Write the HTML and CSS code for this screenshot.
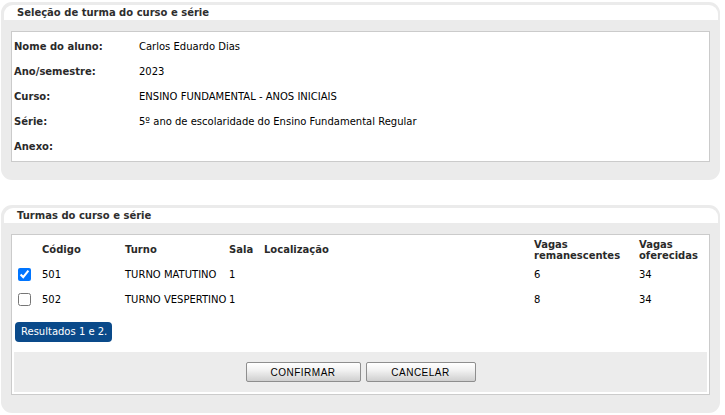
FILE: index.html
```html
<!DOCTYPE html>
<html lang="pt-BR">
<head>
<meta charset="utf-8">
<title>Seleção de turma</title>
<link rel="stylesheet" href="styles.css">
</head>
<body>
<section class="panel panel-first">
  <h2 class="panel-title">Seleção de turma do curso e série</h2>
  <div class="panel-body">
    <div class="box">
      <dl class="info">
        <dt>Nome do aluno:</dt><dd>Carlos Eduardo Dias</dd>
        <dt>Ano/semestre:</dt><dd>2023</dd>
        <dt>Curso:</dt><dd>ENSINO FUNDAMENTAL - ANOS INICIAIS</dd>
        <dt>Série:</dt><dd>5º ano de escolaridade do Ensino Fundamental Regular</dd>
        <dt>Anexo:</dt><dd></dd>
      </dl>
    </div>
  </div>
</section>

<section class="panel panel-second">
  <h2 class="panel-title">Turmas do curso e série</h2>
  <div class="panel-body">
    <div class="box">
      <table class="turmas">
        <colgroup>
          <col class="c-check"><col class="c-cod"><col class="c-turno"><col class="c-sala"><col class="c-loc"><col class="c-rem"><col class="c-ofe">
        </colgroup>
        <thead>
          <tr>
            <th></th><th>Código</th><th>Turno</th><th>Sala</th><th>Localização</th><th>Vagas<br>remanescentes</th><th>Vagas<br>oferecidas</th>
          </tr>
        </thead>
        <tbody>
          <tr>
            <td><input type="checkbox" checked></td><td>501</td><td>TURNO MATUTINO</td><td>1</td><td></td><td>6</td><td>34</td>
          </tr>
          <tr>
            <td><input type="checkbox"></td><td>502</td><td>TURNO VESPERTINO</td><td>1</td><td></td><td>8</td><td>34</td>
          </tr>
        </tbody>
      </table>
      <div class="badge-row"><span class="badge">Resultados 1 e 2.</span></div>
      <div class="actions">
        <button class="btn btn-confirm" type="button">CONFIRMAR</button>
        <button class="btn btn-cancel" type="button">CANCELAR</button>
      </div>
    </div>
  </div>
</section>
</body>
</html>
```

FILE: styles.css
```css
* { box-sizing: border-box; }

body {
  margin: 0;
  padding-top: 2px;
  font-family: "DejaVu Sans", Verdana, sans-serif;
  font-size: 10px;
  color: #000;
  background: #fff;
}

.panel {
  background: #ebebeb;
  border-radius: 11px;
  margin: 0 5px 0 1px;
  padding: 3px 2px 18px 3px;
}

.panel-second {
  margin-top: 25px;
}

.panel-title {
  margin: 0;
  height: 15px;
  line-height: 15px;
  background: #fff;
  border-radius: 9px 9px 0 0;
  padding-left: 13px;
  font-size: 10px;
  font-weight: bold;
  color: #2e2e2e;
}

.panel-body {
  padding: 11px 8px 0 7px;
}

.box {
  background: #fff;
  border: 1px solid #cbcbcb;
  padding: 2px;
}

.info {
  margin: 0;
  display: grid;
  grid-template-columns: 125px 1fr;
  grid-auto-rows: 25px;
  align-items: center;
}

.info dt {
  font-weight: bold;
  color: #2a2a2a;
}

.info dd {
  margin: 0;
}

.turmas {
  border-collapse: collapse;
  border-spacing: 0;
  table-layout: fixed;
  width: 100%;
}

.c-check { width: 28px; }
.c-cod { width: 83px; }
.c-turno { width: 104px; }
.c-sala { width: 35px; }
.c-loc { width: 270px; }
.c-rem { width: 105px; }

.turmas th,
.turmas td {
  padding: 0;
  height: 25px;
  text-align: left;
  vertical-align: middle;
  white-space: nowrap;
  overflow: visible;
}

.turmas th {
  font-weight: bold;
  color: #2a2a2a;
  line-height: 11px;
}

.turmas input[type="checkbox"] {
  display: block;
  margin: 0 0 0 4px;
  width: 13px;
  height: 13px;
}

.badge-row {
  margin-top: 10px;
  padding-left: 1px;
  height: 20px;
}

.badge {
  display: inline-block;
  height: 20px;
  line-height: 20px;
  padding: 0 5px 0 6px;
  background: #0a4a8a;
  color: #fff;
  border-radius: 4px;
}

.actions {
  margin-top: 10px;
  height: 40px;
  background: #ececec;
  display: flex;
  align-items: center;
  justify-content: center;
  gap: 5px;
}

.btn {
  height: 20px;
  padding: 0;
  font-family: "Liberation Sans", Arial, sans-serif;
  font-size: 10px;
  letter-spacing: 0.5px;
  color: #000;
  background: linear-gradient(#ffffff, #f2f2f2 40%, #cfcfcf);
  border: 1px solid #8e8e8e;
  border-radius: 2px;
}

.btn-confirm { width: 115px; }
.btn-cancel { width: 110px; }
```
